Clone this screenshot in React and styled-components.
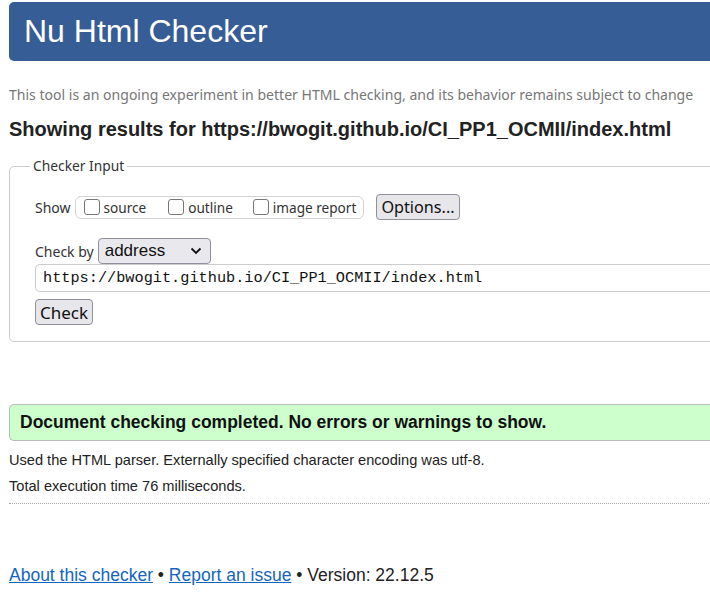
import { createGlobalStyle, styled } from "styled-components"

const Global = createGlobalStyle`
  html, body {
    margin: 0;
    padding: 0;
    background: #fff;
    overflow: hidden;
  }
  body {
    font-family: "Liberation Sans", Arial, sans-serif;
    color: #222;
  }
`

export default function App(){
  return (
    <Page>
      <Global />
      <Header>
        <h1>Nu Html Checker</h1>
      </Header>
      <Intro>This tool is an ongoing experiment in better HTML checking, and its behavior remains subject to change</Intro>
      <Results>Showing results for https://bwogit.github.io/CI_PP1_OCMII/index.html</Results>
      <Fieldset>
        <Legend>Checker Input</Legend>
        <Row>
          <Label>Show</Label>
          <ShowGroup>
            <Check><Box />source</Check>
            <Check $gap={22}><Box />outline</Check>
            <Check $gap={20}><Box />image report</Check>
          </ShowGroup>
          <Button $size={16.2} $left={12}>Options...</Button>
        </Row>
        <Row $top={18}>
          <Label>Check by</Label>
          <Select>
            <span>address</span>
            <svg width="12" height="8" viewBox="0 0 12 8">
              <path d="M1.5 1.5 L6 6 L10.5 1.5" fill="none" stroke="#111" strokeWidth="1.8" />
            </svg>
          </Select>
        </Row>
        <UrlInput>https://bwogit.github.io/CI_PP1_OCMII/index.html</UrlInput>
        <Button $size={17}>Check</Button>
      </Fieldset>
      <Success>Document checking completed. No errors or warnings to show.</Success>
      <Info>Used the HTML parser. Externally specified character encoding was utf-8.</Info>
      <Info>Total execution time 76 milliseconds.</Info>
      <Divider />
      <Footer>
        <a href="#">About this checker</a> • <a href="#">Report an issue</a> • Version: 22.12.5
      </Footer>
    </Page>
  )
}

const Page = styled.div`
  width: 760px;
  padding: 2px 0 0 9px;
`
const Header = styled.div`
  background: #365d96;
  border-radius: 5px;
  height: 59px;
  display: flex;
  align-items: center;
  padding-left: 15px;
  h1 {
    margin: 0;
    color: #fff;
    font-weight: normal;
    font-size: 32px;
    font-family: "Liberation Sans", Arial, sans-serif;
    line-height: 1;
    padding-bottom: 1px;
  }
`
const Intro = styled.p`
  margin: 24px 0 0;
  font-family: "Noto Sans", sans-serif;
  font-size: 14.05px;
  line-height: 20px;
  color: #777;
`
const Results = styled.h2`
  margin: 13px 0 0;
  font-size: 20px;
  line-height: 22px;
  font-weight: bold;
  color: #222;
`
const Fieldset = styled.div`
  position: relative;
  margin-top: 26px;
  border: 1px solid #ccc;
  border-radius: 5px;
  padding: 27px 0 16px 25px;
  font-family: "Noto Sans", sans-serif;
`
const Legend = styled.span`
  position: absolute;
  top: -10px;
  left: 20px;
  padding: 0 3px;
  background: #fff;
  font-size: 13.8px;
  line-height: 18px;
  color: #333;
`
const Row = styled.div`
  display: flex;
  align-items: center;
  margin-top: ${p => p.$top || 0}px;
`
const Label = styled.span`
  font-size: 14px;
  color: #333;
  margin-right: 4px;
`
const ShowGroup = styled.div`
  display: flex;
  align-items: center;
  height: 21px;
  border: 1px solid #d4d4d4;
  border-radius: 6px;
  padding: 0 7px 0 8px;
`
const Check = styled.label`
  display: flex;
  align-items: center;
  font-size: 13.6px;
  color: #333;
  margin-left: ${p => p.$gap || 0}px;
`
const Box = styled.span`
  display: inline-block;
  width: 14px;
  height: 14px;
  border: 1.5px solid #777;
  border-radius: 3px;
  margin-right: 4px;
`
const Button = styled.div`
  display: inline-flex;
  align-items: center;
  height: 24px;
  padding: 0 4px;
  margin-left: ${p => p.$left || 0}px;
  background: #e6e6eb;
  border: 1px solid #8f8f9d;
  border-radius: 4px;
  font-family: "Noto Sans", sans-serif;
  font-size: ${p => p.$size}px;
  color: #111;
`
const Select = styled.div`
  display: flex;
  align-items: center;
  justify-content: space-between;
  width: 97px;
  height: 24px;
  padding: 0 8px 0 6px;
  background: #e9e9ed;
  border: 1px solid #8f8f9d;
  border-radius: 4px;
  font-family: "Liberation Sans", Arial, sans-serif;
  font-size: 17px;
  color: #111;
`
const UrlInput = styled.div`
  margin-top: 0;
  height: 26px;
  display: flex;
  align-items: center;
  padding-left: 7px;
  border: 1px solid #ccc;
  border-right: none;
  border-radius: 5px 0 0 5px;
  font-family: "Liberation Mono", monospace;
  font-size: 15.25px;
  color: #111;
  margin-bottom: 7px;
`
const Success = styled.div`
  margin-top: 62px;
  height: 35px;
  display: flex;
  align-items: center;
  padding-left: 10px;
  background: #ccffcc;
  border: 1px solid #bbb;
  border-right: none;
  border-radius: 5px 0 0 5px;
  font-size: 17.5px;
  font-weight: bold;
  color: #111;
`
const Info = styled.p`
  margin: 10px 0 0;
  font-size: 14.6px;
  line-height: 18px;
  color: #222;
  & + & { margin-top: 8px; }
`
const Divider = styled.div`
  margin-top: 8px;
  border-top: 1px dotted #aaa;
`
const Footer = styled.div`
  margin-top: 61px;
  font-size: 17.5px;
  color: #222;
  a {
    color: #1565c0;
    text-decoration: underline;
  }
`
